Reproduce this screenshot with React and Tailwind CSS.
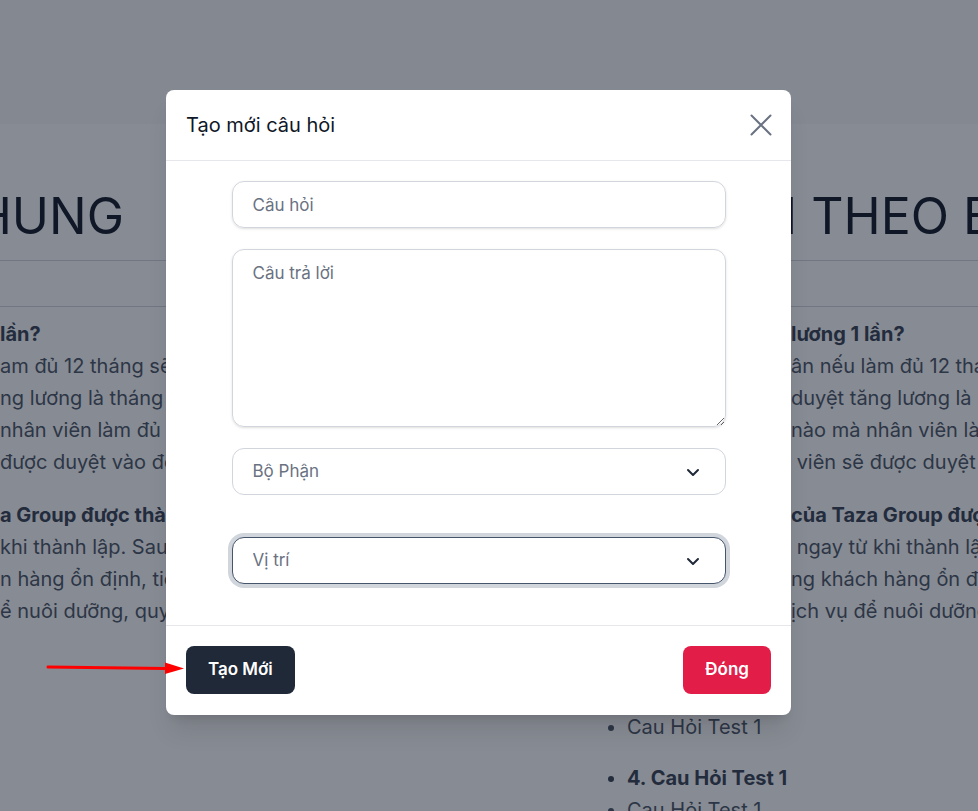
import { useState } from 'react'

const LEFT_LINES = [
  { text: 'lần?', bold: true },
  { text: 'am đủ 12 tháng sẽ được duyệt tăng lương' },
  { text: 'ng lương là tháng mà nhân viên' },
  { text: 'nhân viên làm đủ 12 tháng' },
  { text: ' được duyệt vào đợt tăng lương' },
  { text: 'a Group được thành lập khi nào?', bold: true, gap: true },
  { text: ' khi thành lập. Sau nhiều năm phát triển' },
  { text: 'n hàng ổn định, tiềm năng' },
  { text: 'ể nuôi dưỡng, quy trình' },
]

const RIGHT_LINES = [
  { text: 'lương 1 lần?', bold: true },
  { text: 'ân nếu làm đủ 12 tháng' },
  { text: 'duyệt tăng lương là' },
  { text: 'nào mà nhân viên làm' },
  { text: '\u00a0viên sẽ được duyệt' },
  { text: 'của Taza Group được', bold: true, gap: true },
  { text: '\u00a0ngay từ khi thành lập' },
  { text: 'ng khách hàng ổn định' },
  { text: 'ịch vụ để nuôi dưỡng' },
]

function Lines({ lines }) {
  return lines.map((l, i) => (
    <div
      key={i}
      className={
        'whitespace-nowrap ' +
        (l.bold ? 'font-bold text-gray-700 ' : 'text-gray-600 ') +
        (l.gap ? 'mt-[21px]' : '')
      }
    >
      {l.text}
    </div>
  ))
}

function Chevron() {
  return (
    <svg width="16" height="16" viewBox="0 0 16 16" fill="none" className="pointer-events-none absolute right-[25px] top-1/2 -translate-y-1/2">
      <path d="M3 6l5 5 5-5" stroke="#1f2937" strokeWidth="2" strokeLinecap="round" strokeLinejoin="round" />
    </svg>
  )
}

export default function App() {
  const [question, setQuestion] = useState('')
  const [answer, setAnswer]     = useState('')

  return (
    <div className="relative h-[811px] w-full overflow-hidden bg-white font-['Inter','Noto_Sans',sans-serif]">
      {/* Page behind the dialog */}
      <header className="h-[124px] bg-gray-50" />

      <div className="flex h-[136px] items-start pt-[67px] text-[50px] leading-none text-gray-900">
        <div className="flex w-[124px] shrink-0 justify-end">
          <h2 className="whitespace-nowrap">CÂU HỎI CHUNG</h2>
        </div>
        <h2 className="ml-[464px] whitespace-nowrap">CÂU HỎI THEO BỘ PHẬN</h2>
      </div>
      <div className="h-[47px] border-y border-gray-300" />

      <div className="flex pt-[11px] text-xl leading-8">
        <div className="w-[598px] shrink-0 overflow-hidden">
          <Lines lines={LEFT_LINES} />
        </div>
        <div className="min-w-0 flex-1">
          <div className="pl-[193px]">
            <Lines lines={RIGHT_LINES} />
          </div>
          <ul className="mt-[52px] list-disc pl-[29px] text-gray-600">
            <li className="font-bold text-gray-700">3. Cau Hỏi Test 1</li>
            <li>Cau Hỏi Test 1</li>
            <li className="mt-[19px] font-bold text-gray-700">4. Cau Hỏi Test 1</li>
            <li>Cau Hỏi Test 1</li>
          </ul>
        </div>
      </div>

      {/* Backdrop */}
      <div className="absolute inset-0 bg-gray-900/50" />

      {/* Dialog */}
      <div className="absolute left-[166px] top-[90px] w-[625px] rounded-lg bg-white shadow-xl">
        <div className="flex h-[71px] items-center justify-between border-b border-gray-200 pl-5 pr-[19px]">
          <h3 className="text-xl text-gray-900">Tạo mới câu hỏi</h3>
          <button className="text-gray-500">
            <svg width="22" height="22" viewBox="0 0 22 22" fill="none">
              <path d="M1.5 1.5l19 19M20.5 1.5l-19 19" stroke="currentColor" strokeWidth="2" strokeLinecap="round" />
            </svg>
          </button>
        </div>

        <div className="flex flex-col items-center gap-[21px] border-b border-gray-200 pb-[41px] pt-5">
          <input
            value={question}
            onChange={(e) => setQuestion(e.target.value)}
            placeholder="Câu hỏi"
            className="h-[47px] w-[494px] rounded-xl border border-gray-300 px-5 text-[17px] text-gray-900 shadow-sm outline-none placeholder:text-gray-500"
          />
          <textarea
            value={answer}
            onChange={(e) => setAnswer(e.target.value)}
            placeholder="Câu trả lời"
            className="h-[178px] w-[494px] rounded-xl border border-gray-300 px-5 pt-[11px] text-[17px] text-gray-900 shadow-sm outline-none placeholder:text-gray-500"
          />
          <div className="relative w-[494px]">
            <select defaultValue="" className="h-[47px] w-full appearance-none rounded-xl border border-gray-300 bg-white px-5 text-[17px] text-gray-500 outline-none">
              <option value="" disabled>Bộ Phận</option>
            </select>
            <Chevron />
          </div>
          <div className="relative mt-[21px] w-[494px]">
            <select defaultValue="" className="h-[47px] w-full appearance-none rounded-xl border border-slate-600 bg-white px-5 text-[17px] text-gray-500 outline-none ring-4 ring-gray-300">
              <option value="" disabled>Vị trí</option>
            </select>
            <Chevron />
          </div>
        </div>

        <div className="flex items-center justify-between px-5 pb-[21px] pt-5">
          <button className="h-12 rounded-lg bg-[#1f2937] px-[22px] text-[17px] font-semibold text-white">Tạo Mới</button>
          <button className="h-12 rounded-lg bg-[#e11d48] px-[22px] text-[17px] font-semibold text-white">Đóng</button>
        </div>
      </div>

      {/* Annotation arrow */}
      <svg className="absolute left-[46px] top-[660px]" width="140" height="16" viewBox="0 0 140 16">
        <path d="M2 7 L120 8.6" stroke="#ff0000" strokeWidth="3" strokeLinecap="round" />
        <path d="M119 2.5 L138 8.5 L119 14 Z" fill="#ff0000" />
      </svg>
    </div>
  )
}
